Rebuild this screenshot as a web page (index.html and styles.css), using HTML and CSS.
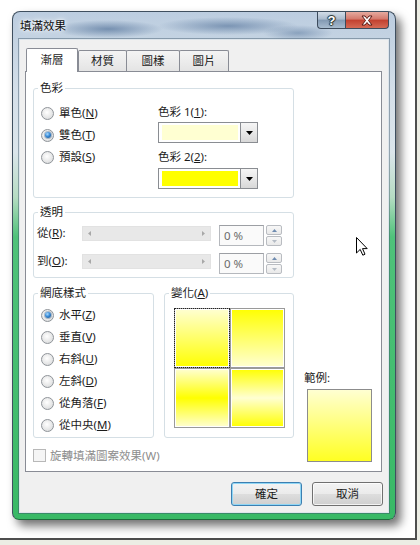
FILE: index.html
```html
<!DOCTYPE html>
<html lang="zh-Hant">
<head>
<meta charset="utf-8">
<title>填滿效果</title>
<link rel="stylesheet" href="styles.css">
</head>
<body>
<div class="paper">
  <div class="window">
    <div class="titlebar">
      <span class="title">填滿效果</span>
      <div class="caption">
        <div class="cap help">?</div>
        <div class="cap close">
          <svg width="14" height="11" viewBox="0 0 14 11"><path d="M2 1 L5 1 L7 3.5 L9 1 L12 1 L8.5 5.5 L12 10 L9 10 L7 7.5 L5 10 L2 10 L5.5 5.5 Z" fill="#fff" stroke="#5a1a14" stroke-width="1" stroke-linejoin="round"/></svg>
        </div>
      </div>
    </div>
    <div class="client">
      <div class="tabs">
        <div class="tab active">漸層</div>
        <div class="tab t2">材質</div>
        <div class="tab t3">圖樣</div>
        <div class="tab t4">圖片</div>
      </div>
      <div class="panel">
        <div class="group g-color">
          <div class="legend">色彩</div>
          <div class="g-color-body">
            <div class="radios">
              <div class="opt"><span class="radio"></span><span>單色(<u>N</u>)</span></div>
              <div class="opt"><span class="radio on"></span><span>雙色(<u>T</u>)</span></div>
              <div class="opt"><span class="radio"></span><span>預設(<u>S</u>)</span></div>
            </div>
            <div class="pickers">
              <div class="plabel">色彩 1(<u>1</u>):</div>
              <div class="combo c1"><span class="swatch light"></span><span class="drop"><svg width="7" height="4" viewBox="0 0 7 4"><path d="M0 0 H7 L3.5 4 Z" fill="#000"/></svg></span></div>
              <div class="plabel p2">色彩 2(<u>2</u>):</div>
              <div class="combo c2"><span class="swatch yellow"></span><span class="drop"><svg width="7" height="4" viewBox="0 0 7 4"><path d="M0 0 H7 L3.5 4 Z" fill="#000"/></svg></span></div>
            </div>
          </div>
        </div>

        <div class="group g-trans">
          <div class="legend">透明</div>
          <div class="trow r1">
            <span class="tlabel">從(<u>R</u>):</span>
            <div class="track">
              <svg width="3" height="5" viewBox="0 0 3 5"><path d="M3 0 V5 L0 2.5 Z" fill="#a8a8a8"/></svg>
              <svg width="3" height="5" viewBox="0 0 3 5"><path d="M0 0 V5 L3 2.5 Z" fill="#a8a8a8"/></svg>
            </div>
            <div class="spinbox">0 %</div>
            <div class="spin">
              <span class="sb up"><svg width="5" height="3" viewBox="0 0 5 3"><path d="M0 3 H5 L2.5 0 Z" fill="#6f8cb0"/></svg></span>
              <span class="sb dn"><svg width="5" height="3" viewBox="0 0 5 3"><path d="M0 0 H5 L2.5 3 Z" fill="#b5bcc5"/></svg></span>
            </div>
          </div>
          <div class="trow r2">
            <span class="tlabel">到(<u>O</u>):</span>
            <div class="track">
              <svg width="3" height="5" viewBox="0 0 3 5"><path d="M3 0 V5 L0 2.5 Z" fill="#a8a8a8"/></svg>
              <svg width="3" height="5" viewBox="0 0 3 5"><path d="M0 0 V5 L3 2.5 Z" fill="#a8a8a8"/></svg>
            </div>
            <div class="spinbox">0 %</div>
            <div class="spin">
              <span class="sb up"><svg width="5" height="3" viewBox="0 0 5 3"><path d="M0 3 H5 L2.5 0 Z" fill="#6f8cb0"/></svg></span>
              <span class="sb dn"><svg width="5" height="3" viewBox="0 0 5 3"><path d="M0 0 H5 L2.5 3 Z" fill="#b5bcc5"/></svg></span>
            </div>
          </div>
        </div>

        <div class="lower">
          <div class="group g-style">
            <div class="legend">網底樣式</div>
            <div class="radios styles">
              <div class="opt"><span class="radio on"></span><span>水平(<u>Z</u>)</span></div>
              <div class="opt"><span class="radio"></span><span>垂直(<u>V</u>)</span></div>
              <div class="opt"><span class="radio"></span><span>右斜(<u>U</u>)</span></div>
              <div class="opt"><span class="radio"></span><span>左斜(<u>D</u>)</span></div>
              <div class="opt"><span class="radio"></span><span>從角落(<u>F</u>)</span></div>
              <div class="opt"><span class="radio"></span><span>從中央(<u>M</u>)</span></div>
            </div>
          </div>
          <div class="group g-var">
            <div class="legend">變化(<u>A</u>)</div>
            <div class="cells">
              <div class="cell v1 focus"></div>
              <div class="cell v2"></div>
              <div class="cell v3"></div>
              <div class="cell v4"></div>
            </div>
          </div>
          <div class="sample-col">
            <div class="slabel">範例:</div>
            <div class="sample"></div>
          </div>
          <div class="checkrow">
            <span class="check"></span><span>旋轉填滿圖案效果(W)</span>
          </div>
        </div>
      </div>
      <div class="buttons">
        <div class="btn default">確定</div>
        <div class="btn">取消</div>
      </div>
    </div>
  </div>
  <svg class="cursor" width="12" height="19" viewBox="0 0 12 19"><path d="M0.5 0.5 L0.5 16 L4.2 12.4 L6.8 18.2 L9 17.2 L6.5 11.6 L11.2 11.6 Z" fill="#fff" stroke="#000" stroke-width="1" stroke-linejoin="miter"/></svg>
</div>
</body>
</html>
```

FILE: styles.css
```css
* { box-sizing: border-box; }
html, body { margin: 0; padding: 0; }
body {
  width: 420px;
  height: 545px;
  overflow: hidden;
  background: #ecede4;
  font-family: "Noto Sans", "Noto Sans CJK TC", sans-serif;
  font-size: 11.5px;
  color: #1b1b1b;
  text-autospace: no-autospace;
}
u { text-decoration: underline; text-underline-offset: 1px; }

.paper {
  position: relative;
  width: 417px;
  height: 540px;
  background: #fff;
  border-right: 2px solid #4e4e4e;
  border-bottom: 2px solid #4e4e4e;
  padding: 11px 0 0 12px;
}

.window {
  width: 384px;
  height: 509px;
  border: 1px solid #3f4f5f;
  border-bottom-color: #1f6a3c;
  border-radius: 8px 8px 7px 7px;
  padding: 0 6px 6px;
  display: flex;
  flex-direction: column;
  box-shadow: 5px 6px 10px rgba(0, 0, 0, 0.55);
  background:
    radial-gradient(ellipse 55px 9px at 95px 17px, rgba(55, 90, 135, 0.55), transparent),
    radial-gradient(ellipse 70px 9px at 215px 14px, rgba(55, 90, 135, 0.5), transparent),
    radial-gradient(ellipse 35px 8px at 285px 21px, rgba(55, 90, 135, 0.4), transparent),
    linear-gradient(180deg, #bccde0 0px, #c4d3e2 28px, #d4dfe9 80px, #dbe5eb 140px, #b6dcc3 185px, #4fc27a 225px, #39b966 100%);
}

.titlebar {
  height: 27px;
  display: flex;
  justify-content: space-between;
  align-items: flex-start;
}
.title {
  padding-left: 1px;
  line-height: 27px;
  color: #0c0c0c;
  text-shadow: 0 0 6px #fff, 0 0 3px #fff;
}
.caption { display: flex; }
.cap {
  height: 17px;
  border: 1px solid #3c4b5c;
  border-top: none;
  display: flex;
  align-items: center;
  justify-content: center;
}
.help {
  width: 28px;
  border-radius: 0 0 0 4px;
  border-right: none;
  background: linear-gradient(180deg, #d3dde8 0%, #aabbcd 45%, #8299b2 50%, #a8bccf 100%);
  color: #fff;
  font-family: "Liberation Sans", sans-serif;
  font-weight: bold;
  font-size: 13px;
  line-height: 17px;
  text-shadow: 0 0 1px #233, 1px 0 1px #233, -1px 0 1px #233, 0 1px 1px #233, 0 -1px 1px #233;
}
.close {
  width: 44px;
  border-radius: 0 0 4px 0;
  background: linear-gradient(180deg, #e6aa9f 0%, #d4786b 45%, #c2402f 50%, #d56a55 100%);
}

.client {
  flex: 1;
  background: #f0f0f0;
  border: 1px solid #dde5ec;
  box-shadow: 0 0 0 1px rgba(60, 85, 105, 0.45);
  padding: 8px 6px 0 5px;
  display: flex;
  flex-direction: column;
}

.tabs {
  height: 24px;
  display: flex;
  align-items: flex-end;
  padding-left: 1px;
}
.tab {
  height: 22px;
  border: 1px solid #898c95;
  border-bottom: none;
  border-radius: 2px 2px 0 0;
  background: linear-gradient(180deg, #f4f4f4 0%, #ececec 50%, #e3e3e3 100%);
  text-align: center;
  line-height: 20px;
}
.tab.active {
  height: 24px;
  width: 52px;
  background: #fff;
  position: relative;
  z-index: 1;
  line-height: 22px;
}
.t2 { width: 49px; }
.t3 { width: 54px; margin-left: -1px; }
.t4 { width: 50px; margin-left: -1px; }

.panel {
  margin-top: -1px;
  width: 357px;
  height: 401px;
  border: 1px solid #898c95;
  background: #fff;
  padding: 16px 0 0 7px;
}

.group {
  border: 1px solid #d5dfe5;
  border-radius: 3px;
}
.legend {
  width: fit-content;
  margin: -8px 0 0 4px;
  padding: 0 2px;
  line-height: 14px;
  background: #fff;
}

.g-color { width: 261px; height: 110px; }
.g-color-body { display: flex; padding-left: 7px; }
.radios { width: 117px; padding-top: 7px; }
.opt {
  height: 22px;
  display: flex;
  align-items: center;
  gap: 5px;
  line-height: 14px;
}
.radio {
  width: 13px;
  height: 13px;
  flex: none;
  border-radius: 50%;
  border: 1px solid #8f9499;
  background: radial-gradient(circle at 45% 40%, #ffffff 0%, #f0f0f0 35%, #d2d4d6 100%);
  position: relative;
}
.radio.on::after {
  content: "";
  position: absolute;
  left: 2.5px;
  top: 2.5px;
  width: 6px;
  height: 6px;
  border-radius: 50%;
  background: radial-gradient(circle at 40% 35%, #a9dcff 0%, #3a8ad6 45%, #10477f 100%);
  box-shadow: 0 0 0 1px rgba(40, 80, 120, 0.35);
}
.pickers { padding-top: 10px; }
.plabel { line-height: 14px; }
.p2 { margin-top: 7px; }
.combo {
  margin-top: 3px;
  width: 100px;
  height: 21px;
  border: 1px solid #8a8d92;
  background: #fff;
  display: flex;
}
.c2 { margin-top: 4px; }
.swatch {
  flex: 1;
  margin: 2px 2px 2px 3px;
}
.swatch.light { background: #ffffd2; }
.swatch.yellow { background: #ffff00; }
.drop {
  width: 17px;
  border-left: 1px solid #8a8d92;
  background: linear-gradient(180deg, #f6f6f6 0%, #e8e8e8 50%, #d8d8d8 100%);
  display: flex;
  align-items: center;
  justify-content: center;
}

.g-trans { width: 261px; height: 66px; margin-top: 14px; }
.trow {
  display: flex;
  align-items: flex-start;
  height: 21px;
  padding-left: 3px;
}
.r1 { margin-top: 6px; }
.r2 { margin-top: 7px; }
.tlabel { width: 45px; line-height: 14px; margin-top: 1px; }
.track {
  width: 129px;
  height: 15px;
  margin-top: 1px;
  background: #e8e8e8;
  border: 1px solid #e2e2e2;
  display: flex;
  align-items: center;
  justify-content: space-between;
  padding: 0 5px;
}
.spinbox {
  margin-left: 8px;
  width: 45px;
  height: 21px;
  border: 1px solid #b5b8bd;
  border-top-color: #9c9fa4;
  background: #fafafa;
  color: #6b6b6b;
  padding-left: 4px;
  line-height: 19px;
}
.spin {
  margin-left: 2px;
  width: 16px;
  height: 21px;
  display: flex;
  flex-direction: column;
  gap: 1px;
}
.sb {
  flex: 1;
  border: 1px solid #b9bcc1;
  border-radius: 2px;
  background: linear-gradient(180deg, #f7f7f7 0%, #e9e9e9 100%);
  display: flex;
  align-items: center;
  justify-content: center;
}

.lower {
  margin-top: 15px;
  display: grid;
  grid-template-columns: 121px 130px 70px;
  grid-template-rows: 145px auto;
  column-gap: 10px;
}
.g-style { grid-column: 1; grid-row: 1; }
.styles { padding-left: 7px; padding-top: 4px; width: auto; }
.g-var { grid-column: 2; grid-row: 1; }
.cells {
  margin: 8px 0 0 9px;
  display: grid;
  grid-template-columns: 56px 55px;
  grid-template-rows: 60px 60px;
}
.cell {
  border: 1px solid #9a9a9a;
  box-shadow: inset 0 0 0 1px #fff;
}
.v1 { background: linear-gradient(180deg, #ffffd2 0%, #ffff00 100%); }
.v2 { background: linear-gradient(180deg, #ffff00 0%, #ffffd2 100%); }
.v3 { background: linear-gradient(180deg, #ffffd2 0%, #ffff00 50%, #ffffd2 100%); }
.v4 { background: linear-gradient(180deg, #ffff00 0%, #ffffd2 50%, #ffff00 100%); }
.focus { outline: 1px dotted #222; outline-offset: -1px; }

.sample-col {
  grid-column: 3;
  grid-row: 1 / 3;
  align-self: end;
}
.slabel { line-height: 14px; }
.sample {
  margin: 4px 0 0 3px;
  width: 65px;
  height: 73px;
  border: 1px solid #8c8c8c;
  background: linear-gradient(180deg, #ffffd2 0%, #ffff22 100%);
}
.checkrow {
  grid-column: 1 / 3;
  grid-row: 2;
  margin-top: 11px;
  height: 13px;
  display: flex;
  align-items: center;
  gap: 4px;
  color: #8d8d8d;
  line-height: 13px;
}
.check {
  width: 13px;
  height: 13px;
  border: 1px solid #b8b8b8;
  background: #f5f5f5;
}

.buttons {
  margin-top: 10px;
  margin-right: -1px;
  display: flex;
  justify-content: flex-end;
  gap: 10px;
}
.btn {
  width: 71px;
  height: 24px;
  border: 1px solid #707070;
  border-radius: 3px;
  background: linear-gradient(180deg, #f3f3f3 0%, #ebebeb 48%, #dddddd 52%, #cfcfcf 100%);
  box-shadow: inset 0 0 0 1px rgba(255, 255, 255, 0.75);
  text-align: center;
  line-height: 22px;
}
.btn.default {
  border-color: #3c7fb1;
  box-shadow: inset 0 0 0 1px #8fd6f5;
}

.cursor {
  position: absolute;
  left: 356px;
  top: 237px;
}
```
